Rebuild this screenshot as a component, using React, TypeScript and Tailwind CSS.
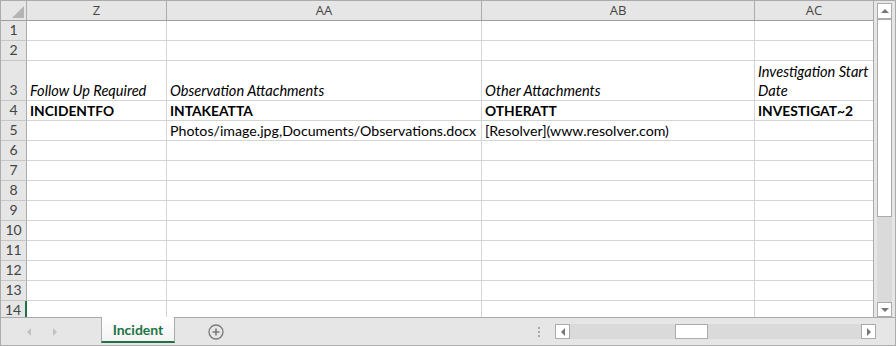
import { Fragment } from 'react';

const cols = [
  { name: 'Z', w: 'w-[140px]' },
  { name: 'AA', w: 'w-[315px]' },
  { name: 'AB', w: 'w-[273px]' },
  { name: 'AC', w: 'w-[119px]' },
];

type Cell = { text?: string; style?: 'italic' | 'bold' };

const rows: { n: number; h: string; cells: Cell[] }[] = [
  { n: 1, h: 'h-[20px]', cells: [{}, {}, {}, {}] },
  { n: 2, h: 'h-[20px]', cells: [{}, {}, {}, {}] },
  {
    n: 3,
    h: 'h-[40px]',
    cells: [
      { text: 'Follow Up Required', style: 'italic' },
      { text: 'Observation Attachments', style: 'italic' },
      { text: 'Other Attachments', style: 'italic' },
      { text: 'Investigation Start Date', style: 'italic' },
    ],
  },
  {
    n: 4,
    h: 'h-[20px]',
    cells: [
      { text: 'INCIDENTFO', style: 'bold' },
      { text: 'INTAKEATTA', style: 'bold' },
      { text: 'OTHERATT', style: 'bold' },
      { text: 'INVESTIGAT~2', style: 'bold' },
    ],
  },
  {
    n: 5,
    h: 'h-[20px]',
    cells: [{}, { text: 'Photos/image.jpg,Documents/Observations.docx' }, { text: '[Resolver](www.resolver.com)' }, {}],
  },
  ...[6, 7, 8, 9, 10, 11, 12, 13, 14].map((n) => ({ n, h: 'h-[20px]', cells: [{}, {}, {}, {}] })),
];

export default function App() {
  return (
    <div className="w-[896px] h-[346px] flex flex-col border border-[#ababab] bg-[#e6e6e6] overflow-hidden font-['Lato','Liberation_Sans',sans-serif]">
      <div className="flex flex-1 min-h-0">
        {/* sheet grid */}
        <div className="w-[873px] overflow-hidden bg-white border-r border-[#ababab]">
          <div className="flex h-[20px] bg-[#e6e6e6] border-b border-[#9e9e9e]">
            <div className="w-[26px] shrink-0 border-r border-[#ababab] flex items-end justify-end p-[2px]">
              <div className="w-0 h-0 border-l-[12px] border-l-transparent border-b-[12px] border-b-[#b4b4b4]" />
            </div>
            {cols.map((c) => (
              <div
                key={c.name}
                className={`${c.w} shrink-0 border-r border-[#ababab] flex items-center justify-center text-[13px] text-[#444] font-['Open_Sans',sans-serif]`}
              >
                {c.name}
              </div>
            ))}
          </div>
          {rows.map((r) => (
            <div key={r.n} className={`flex ${r.h}`}>
              <div
                className={`w-[26px] shrink-0 bg-[#e6e6e6] border-b border-[#c6c6c6] flex items-end justify-center pb-[1px] text-[14px] leading-[18px] text-[#444] ${
                  r.n === 14 ? 'border-r-2 border-r-[#217346]' : 'border-r border-r-[#ababab]'
                }`}
              >
                {r.n}
              </div>
              {r.cells.map((cell, i) => (
                <Fragment key={i}>
                  <div
                    className={`${cols[i].w} shrink-0 border-r border-b border-[#d4d4d4] flex items-end px-[3px] leading-[19px] text-black whitespace-nowrap ${
                      cell.style === 'italic' ? 'italic text-[14.6px]' : cell.style === 'bold' ? 'font-bold text-[13.8px]' : 'text-[14.2px]'
                    }`}
                  >
                    {r.n === 3 && i === 3 ? (
                      <span className="leading-[19px]">
                        Investigation Start
                        <br />
                        Date
                      </span>
                    ) : (
                      cell.text
                    )}
                  </div>
                </Fragment>
              ))}
            </div>
          ))}
        </div>
        {/* vertical scrollbar */}
        <div className="flex-1 flex flex-col px-[3px] pt-[2px] pb-0 bg-[#e6e6e6]">
          <div className="h-[16px] bg-white border border-[#ababab] flex items-center justify-center">
            <div className="w-0 h-0 border-l-[4px] border-r-[4px] border-l-transparent border-r-transparent border-b-[4px] border-b-[#777]" />
          </div>
          <div className="flex-1 flex flex-col bg-[#dadada]">
            <div className="h-[198px] bg-white border border-[#ababab]" />
          </div>
          <div className="h-[15px] bg-white border border-[#ababab] flex items-center justify-center">
            <div className="w-0 h-0 border-l-[4px] border-r-[4px] border-l-transparent border-r-transparent border-t-[4px] border-t-[#777]" />
          </div>
        </div>
      </div>
      {/* sheet tab bar */}
      <div className="h-[28px] shrink-0 border-t border-[#ababab] flex items-start bg-[#e6e6e6]">
        <div className="w-[100px] h-full flex items-center gap-[22px] pl-[26px]">
          <div className="w-0 h-0 border-t-[4px] border-b-[4px] border-t-transparent border-b-transparent border-r-[4px] border-r-[#c2c2c2]" />
          <div className="w-0 h-0 border-t-[4px] border-b-[4px] border-t-transparent border-b-transparent border-l-[4px] border-l-[#c2c2c2]" />
        </div>
        <div className="-mt-px w-[74px] h-[26px] bg-gradient-to-b from-white to-[#f3f3f3] border-x border-[#ababab] border-b-2 border-b-[#217346] flex items-center justify-center text-[14px] font-bold text-[#217346]">
          Incident
        </div>
        <div className="h-full flex items-center pl-[33px]">
          <svg width="16" height="16" viewBox="0 0 16 16" fill="none" stroke="#7a7a7a" strokeWidth="1.3">
            <circle cx="8" cy="8" r="7" />
            <path d="M8 4.5v7M4.5 8h7" strokeWidth="1.6" />
          </svg>
        </div>
        <div className="h-full flex items-center ml-[314px]">
          <div className="flex flex-col gap-[2px]">
            <div className="w-[2px] h-[2px] bg-[#a8a8a8]" />
            <div className="w-[2px] h-[2px] bg-[#a8a8a8]" />
            <div className="w-[2px] h-[2px] bg-[#a8a8a8]" />
          </div>
        </div>
        <div className="ml-[15px] mt-[6px] w-[321px] h-[15px] bg-[#dadada] flex">
          <div className="w-[15px] h-full bg-white border border-[#ababab] flex items-center justify-center">
            <div className="w-0 h-0 border-t-[4px] border-b-[4px] border-t-transparent border-b-transparent border-r-[4px] border-r-[#777]" />
          </div>
          <div className="w-[105px]" />
          <div className="w-[33px] h-full bg-white border border-[#ababab]" />
          <div className="flex-1" />
          <div className="w-[15px] h-full bg-white border border-[#ababab] flex items-center justify-center">
            <div className="w-0 h-0 border-t-[4px] border-b-[4px] border-t-transparent border-b-transparent border-l-[4px] border-l-[#777]" />
          </div>
        </div>
      </div>
    </div>
  );
}
